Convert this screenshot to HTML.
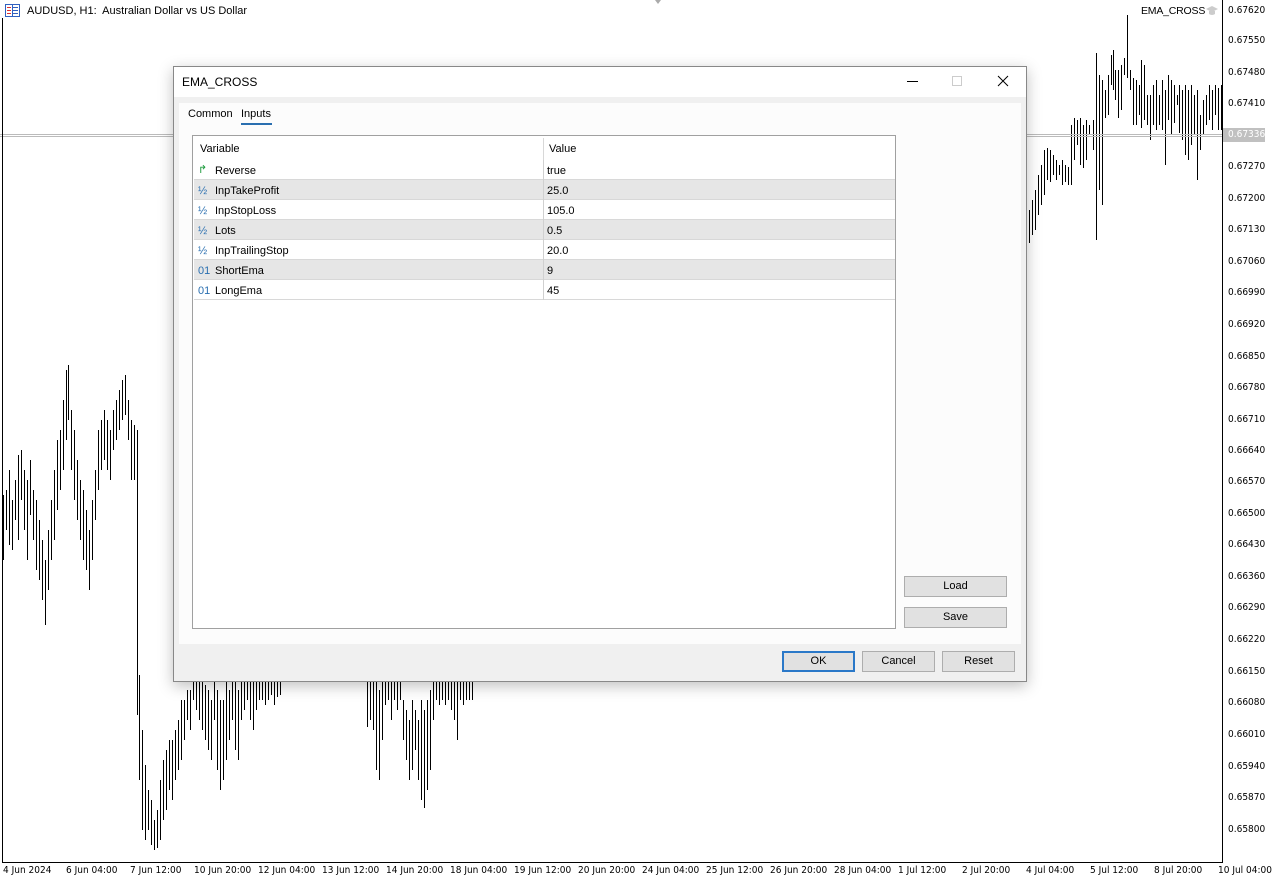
<!DOCTYPE html>
<html><head><meta charset="utf-8"><style>
*{margin:0;padding:0;box-sizing:border-box}
body{width:1276px;height:882px;background:#fff;font-family:"Liberation Sans",sans-serif;position:relative;overflow:hidden}
.ax{position:absolute;font-size:10px;color:#000;white-space:nowrap;font-family:"DejaVu Sans","Liberation Sans",sans-serif;transform:scaleX(0.9);transform-origin:left}
.dlg{position:absolute;left:173px;top:66px;width:854px;height:616px;background:#f0f0f0;border:1px solid #888;box-shadow:0 4px 14px rgba(0,0,0,.25);font-size:11px}
.t{position:absolute;font-size:11px;color:#000;white-space:nowrap}
.btn{position:absolute;background:#e1e1e1;border:1px solid #adadad;font-size:11px;text-align:center;line-height:18px}
.row{position:absolute;left:1px;width:701px;height:20px;border-bottom:1px solid #d8d8d8}
.row.g{background:#e6e6e6}
.row span{position:absolute;top:5px;font-size:11px}
.ic{position:absolute;left:4px;top:2px;font-size:10px;color:#2a6fb0}
</style></head><body>
<svg width="1276" height="882" style="position:absolute;left:0;top:0">
<g stroke="#000" stroke-width="1" fill="none" shape-rendering="crispEdges" transform="translate(0.5,0)">
<path d="M3 495V560M6 490V530M9 470V545M12 500V550M15 480V520M18 455V540M21 450V500M24 470V530M27 480V560M30 460V515M33 490V540M36 500V570M39 520V580M42 540V600M45 560V625M48 530V590M51 500V560M54 470V540M57 440V510M60 430V490M63 400V470M66 370V440M68 365V420M71 410V470M74 430V500M77 460V520M80 480V540M83 490V560M86 510V570M89 530V590M92 500V560M95 470V520M98 430V490M101 420V470M104 410V460M107 420V470M110 430V480M113 410V450M116 400V440M119 390V430M122 380V420M125 375V415M128 400V440M131 420V480M134 425V480M137 430V715"/>
<path d="M139 675V780M142 730V830M145 765V840M148 790V830M151 800V845M154 820V850M157 810V848M160 780V840M163 760V820M166 750V810M169 740V790M172 740V800M175 730V780M178 720V770M181 700V760M184 700V740M187 690V720M190 690V730M193 680V700M196 680V710M199 680V720M202 680V730M205 685V740M208 690V750M211 700V760M214 680V720M217 690V770M220 700V790M223 700V780M226 680V760M229 690V740M232 680V720M235 680V750M238 690V760M241 680V720M244 680V710M247 680V700M250 680V720M253 680V730M256 680V710M259 680V700M262 680V700M265 680V705M268 680V700M271 680V695M274 680V705M277 680V697M280 680V695"/>
<path d="M367 680V727M370 680V720M373 680V730M376 680V770M379 690V780M382 680V740M385 680V705M388 680V700M391 680V720M394 680V700M397 680V710M400 680V700M403 700V740M406 710V760M409 720V780M412 700V770M415 710V750M418 720V780M421 700V800M424 710V808M427 700V790M430 690V770M433 680V720M436 680V700M439 680V705M442 680V700M445 680V705M448 680V700M451 680V710M454 680V720M457 680V740M460 680V700M463 680V705M466 680V700M469 680V700M472 680V700"/>
<path d="M1029 210V243M1032 200V235M1035 190V230M1038 175V215M1041 165V205M1044 150V195M1047 148V180M1050 150V182M1053 155V175M1056 160V180M1059 165V175M1062 160V185M1065 165V182M1068 167V185M1071 125V185M1074 118V160M1077 120V145M1080 118V165M1083 125V168M1086 120V160M1089 125V135M1093 120V150M1096 53V240M1099 75V190M1102 80V205M1105 90V118M1108 75V115M1111 55V85M1113 50V90M1115 70V100M1118 70V118M1121 65V110M1124 58V75M1127 15V78M1130 70V90M1133 78V125M1136 80V125M1139 85V115M1141 60V128M1144 65V120M1147 95V125M1150 95V140M1153 85V125M1156 80V130M1159 95V125M1162 80V130M1165 90V165M1168 75V120M1171 80V135M1174 85V123M1177 95V105M1179 85V133M1182 90V140M1185 85V155M1188 90V160M1191 85V145M1194 95V135M1197 90V180M1200 115V150M1203 100V135M1206 95V125M1209 85V120M1212 90V130M1215 85V115M1218 88V130M1221 85V130"/>
</g>
<path d="M0 134.5H1222M0 136.5H1222" stroke="#bbb" stroke-width="1"/>
<path d="M2.5 18V862.5H1222.5V0" stroke="#000" fill="none"/>
<path d="M655 0L658 4L661 0Z" fill="#aaa"/>
<rect x="1223" y="128" width="42" height="14" fill="#c0c0c0"/>
</svg>
<svg style="position:absolute;left:5px;top:4px" width="15" height="13"><rect x=".5" y=".5" width="14" height="12" fill="#fff" stroke="#3060c0"/><path d="M2 3.5H6M2 6.5H6M2 9.5H6" stroke="#e03030"/><path d="M8 3.5H13M8 6.5H13M8 9.5H13" stroke="#3060c0"/><path d="M7.5 1V12" stroke="#3060c0"/></svg>
<div class="t" style="left:27px;top:5px;font-size:11px">AUDUSD, H1:&nbsp; Australian Dollar vs US Dollar</div>
<div class="t" style="left:1141px;top:5px;font-size:10.5px;letter-spacing:-0.2px">EMA_CROSS</div>
<svg style="position:absolute;left:1205px;top:5px" width="14" height="12"><path d="M1 4L7 1L13 4L7 7Z" fill="#ccc"/><path d="M4 6V9Q7 11 10 9V6" fill="#ccc"/></svg>
<div class="ax" style="left:1228px;top:5px">0.67620</div><div class="ax" style="left:1228px;top:35px">0.67550</div><div class="ax" style="left:1228px;top:67px">0.67480</div><div class="ax" style="left:1228px;top:98px">0.67410</div><div class="ax" style="left:1228px;top:129px;color:#fff">0.67336</div><div class="ax" style="left:1228px;top:161px">0.67270</div><div class="ax" style="left:1228px;top:193px">0.67200</div><div class="ax" style="left:1228px;top:224px">0.67130</div><div class="ax" style="left:1228px;top:256px">0.67060</div><div class="ax" style="left:1228px;top:287px">0.66990</div><div class="ax" style="left:1228px;top:319px">0.66920</div><div class="ax" style="left:1228px;top:351px">0.66850</div><div class="ax" style="left:1228px;top:382px">0.66780</div><div class="ax" style="left:1228px;top:414px">0.66710</div><div class="ax" style="left:1228px;top:445px">0.66640</div><div class="ax" style="left:1228px;top:476px">0.66570</div><div class="ax" style="left:1228px;top:508px">0.66500</div><div class="ax" style="left:1228px;top:539px">0.66430</div><div class="ax" style="left:1228px;top:571px">0.66360</div><div class="ax" style="left:1228px;top:602px">0.66290</div><div class="ax" style="left:1228px;top:634px">0.66220</div><div class="ax" style="left:1228px;top:666px">0.66150</div><div class="ax" style="left:1228px;top:697px">0.66080</div><div class="ax" style="left:1228px;top:729px">0.66010</div><div class="ax" style="left:1228px;top:761px">0.65940</div><div class="ax" style="left:1228px;top:792px">0.65870</div><div class="ax" style="left:1228px;top:824px">0.65800</div>
<div class="ax" style="left:3px;top:865px">4 Jun 2024</div><div class="ax" style="left:66px;top:865px">6 Jun 04:00</div><div class="ax" style="left:130px;top:865px">7 Jun 12:00</div><div class="ax" style="left:194px;top:865px">10 Jun 20:00</div><div class="ax" style="left:258px;top:865px">12 Jun 04:00</div><div class="ax" style="left:322px;top:865px">13 Jun 12:00</div><div class="ax" style="left:386px;top:865px">14 Jun 20:00</div><div class="ax" style="left:450px;top:865px">18 Jun 04:00</div><div class="ax" style="left:514px;top:865px">19 Jun 12:00</div><div class="ax" style="left:578px;top:865px">20 Jun 20:00</div><div class="ax" style="left:642px;top:865px">24 Jun 04:00</div><div class="ax" style="left:706px;top:865px">25 Jun 12:00</div><div class="ax" style="left:770px;top:865px">26 Jun 20:00</div><div class="ax" style="left:834px;top:865px">28 Jun 04:00</div><div class="ax" style="left:898px;top:865px">1 Jul 12:00</div><div class="ax" style="left:962px;top:865px">2 Jul 20:00</div><div class="ax" style="left:1026px;top:865px">4 Jul 04:00</div><div class="ax" style="left:1090px;top:865px">5 Jul 12:00</div><div class="ax" style="left:1154px;top:865px">8 Jul 20:00</div><div class="ax" style="left:1218px;top:865px">10 Jul 04:00</div>

<div class="dlg">
 <div style="position:absolute;left:0;top:0;width:852px;height:30px;background:#fff"></div>
 <div class="t" style="left:8px;top:8px;font-size:12px">EMA_CROSS</div>
 <div style="position:absolute;left:733px;top:14px;width:11px;height:1px;background:#000"></div>
 <div style="position:absolute;left:778px;top:9px;width:10px;height:10px;border:1px solid #ccc"></div>
 <svg style="position:absolute;left:823px;top:8px" width="12" height="12"><path d="M1 1L11 11M11 1L1 11" stroke="#000"/></svg>
 <div style="position:absolute;left:5px;top:36px;width:842px;height:541px;background:#fcfcfc"></div>
 <div class="t" style="left:14px;top:41px">Common</div>
 <div class="t" style="left:67px;top:41px">Inputs</div>
 <div style="position:absolute;left:67px;top:56px;width:31px;height:2px;background:#2a6fb0"></div>
 <div style="position:absolute;left:18px;top:68px;width:704px;height:494px;background:#fff;border:1px solid #a0a0a0">
  <div class="t" style="left:7px;top:7px">Variable</div>
  <div class="t" style="left:356px;top:7px">Value</div>
  <div style="position:absolute;left:350px;top:2px;width:1px;height:162px;background:#d8d8d8"></div>
  <div class="row" style="top:24px"><span class="ic" style="color:#1a9a3a;top:3px">↱</span><span style="left:21px">Reverse</span><span style="left:353px">true</span></div>
  <div class="row g" style="top:44px"><span class="ic">½</span><span style="left:21px">InpTakeProfit</span><span style="left:353px">25.0</span></div>
  <div class="row" style="top:64px"><span class="ic">½</span><span style="left:21px">InpStopLoss</span><span style="left:353px">105.0</span></div>
  <div class="row g" style="top:84px"><span class="ic">½</span><span style="left:21px">Lots</span><span style="left:353px">0.5</span></div>
  <div class="row" style="top:104px"><span class="ic">½</span><span style="left:21px">InpTrailingStop</span><span style="left:353px">20.0</span></div>
  <div class="row g" style="top:124px"><span class="ic">01</span><span style="left:21px">ShortEma</span><span style="left:353px">9</span></div>
  <div class="row" style="top:144px"><span class="ic">01</span><span style="left:21px">LongEma</span><span style="left:353px">45</span></div>
  <div style="position:absolute;left:350px;top:24px;width:1px;height:140px;background:#d0d0d0"></div>
 </div>
 <div class="btn" style="left:730px;top:509px;width:103px;height:21px">Load</div>
 <div class="btn" style="left:730px;top:540px;width:103px;height:21px">Save</div>
 <div class="btn" style="left:608px;top:584px;width:73px;height:21px;border:2px solid #2a78c8;line-height:16px">OK</div>
 <div class="btn" style="left:688px;top:584px;width:73px;height:21px">Cancel</div>
 <div class="btn" style="left:768px;top:584px;width:73px;height:21px">Reset</div>
</div>
</body></html>
